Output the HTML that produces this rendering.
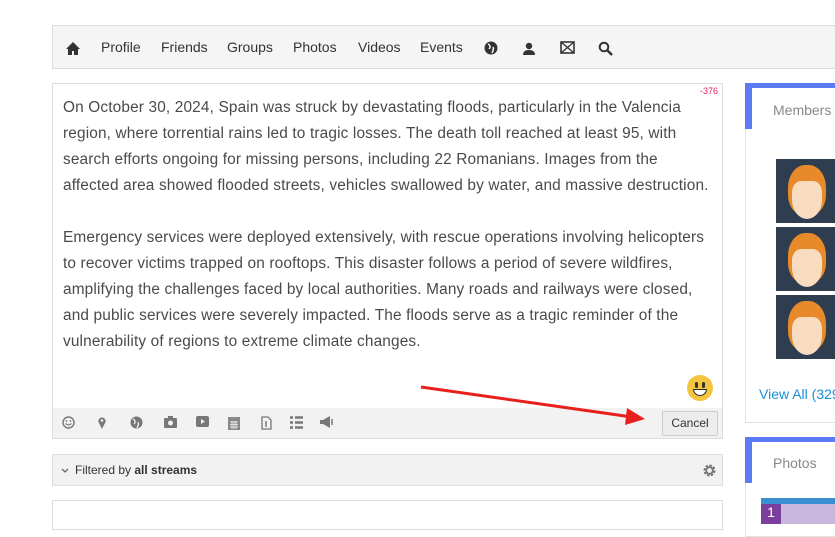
<!DOCTYPE html>
<html><head><meta charset="utf-8"><style>
*{box-sizing:border-box;margin:0;padding:0}
body{width:835px;height:517px;overflow:hidden;background:#fff;font-family:"Liberation Sans",sans-serif;position:relative;color:#333}
.nav{position:absolute;left:52px;top:25px;width:790px;height:44px;background:#f4f5f4;border:1px solid #ddd;border-right:none}
.nav span{position:absolute;top:13px;font-size:14px;color:#333}
.nav svg{position:absolute;top:15px}
.box{position:absolute;left:52px;top:83px;width:671px;height:356px;border:1px solid #ddd}
.txt{position:absolute;left:10px;top:11px;width:680px;font-size:15.4px;letter-spacing:0.15px;line-height:26px;color:#4a4a4a;white-space:nowrap}
.cnt{position:absolute;right:4px;top:2px;font-size:9px;color:#e0245e}
.tb{position:absolute;left:0;bottom:0;width:669px;height:30px;background:#f2f2f2}
.tb svg{position:absolute;top:8px}
.cancel{position:absolute;right:4px;top:3px;width:56px;height:25px;border:1px solid #ccc;background:#eceded;border-radius:2px;font-size:12px;text-align:center;line-height:23px;color:#333}
.filter{position:absolute;left:52px;top:454px;width:671px;height:32px;background:#f2f2f2;border:1px solid #ddd;font-size:12px;line-height:30px;padding-left:22px;color:#333}
.box2{position:absolute;left:52px;top:500px;width:671px;height:30px;border:1px solid #ddd}
.side{position:absolute;left:745px;width:100px;border:1px solid #e2e2e2}
.side .bl{position:absolute;left:-1px;top:-1px;width:7px;height:46px;background:#5b7cf6}
.side .bt{position:absolute;left:-1px;top:-1px;right:0;height:5px;background:#5b7cf6}
.side .h{position:absolute;left:27px;font-size:14px;color:#888}
.av{position:absolute;left:30px;width:70px;height:64px;background:#2e3e50;overflow:hidden}
</style></head><body>
<div class="nav">
<svg style="left:12px" width="16" height="15" viewBox="0 0 16 15"><path d="M8 1L1 8h2v6h4v-4h2v4h4V8h2z" fill="#333"/></svg>
<span style="left:48px">Profile</span><span style="left:108px">Friends</span><span style="left:174px">Groups</span><span style="left:240px">Photos</span><span style="left:305px">Videos</span><span style="left:367px">Events</span>
<svg style="left:431px" width="14" height="14" viewBox="0 0 14 14"><circle cx="7" cy="7" r="6.5" fill="#333"/><path d="M4 3c2 1 3 3 1 5M9 6c1 2 0 4-1 6" stroke="#f4f5f4" stroke-width="1.5" fill="none"/></svg>
<svg style="left:469px" width="14" height="15" viewBox="0 0 14 15"><circle cx="7" cy="5" r="3.2" fill="#333"/><path d="M1 14c0-4 3-5 6-5s6 1 6 5z" fill="#333"/></svg>
<svg style="left:507px" width="15" height="13" viewBox="0 0 15 13"><rect x="1" y="1" width="13" height="11" fill="none" stroke="#333" stroke-width="1.6"/><path d="M1 1l13 11M14 1L1 12" stroke="#333" stroke-width="1.3"/></svg>
<svg style="left:545px" width="15" height="15" viewBox="0 0 15 15"><circle cx="6" cy="6" r="4.3" fill="none" stroke="#333" stroke-width="2"/><path d="M9 9l5 5" stroke="#333" stroke-width="2.5"/></svg>
</div>
<div class="box">
<div class="cnt">-376</div>
<div class="txt">On October 30, 2024, Spain was struck by devastating floods, particularly in the Valencia<br>region, where torrential rains led to tragic losses. The death toll reached at least 95, with<br>search efforts ongoing for missing persons, including 22 Romanians. Images from the<br>affected area showed flooded streets, vehicles swallowed by water, and massive destruction.<br><br>Emergency services were deployed extensively, with rescue operations involving helicopters<br>to recover victims trapped on rooftops. This disaster follows a period of severe wildfires,<br>amplifying the challenges faced by local authorities. Many roads and railways were closed,<br>and public services were severely impacted. The floods serve as a tragic reminder of the<br>vulnerability of regions to extreme climate changes.</div>
<div style="position:absolute;left:634px;top:291px;width:26px;height:26px;border-radius:50%;background:#f5c542"><div style="position:absolute;left:8px;top:7px;width:3px;height:6px;background:#333;border-radius:2px"></div><div style="position:absolute;left:15px;top:7px;width:3px;height:6px;background:#333;border-radius:2px"></div><div style="position:absolute;left:6px;top:14px;width:14px;height:7px;background:#fff;border:1.5px solid #333;border-radius:0 0 7px 7px"></div></div>
<div class="tb">
<svg style="left:9px" width="13" height="13" viewBox="0 0 13 13"><circle cx="6.5" cy="6.5" r="5.5" fill="none" stroke="#777" stroke-width="1.4"/><circle cx="4.5" cy="5" r=".9" fill="#777"/><circle cx="8.5" cy="5" r=".9" fill="#777"/><path d="M3.5 7.5q3 3 6 0" stroke="#777" fill="none" stroke-width="1.2"/></svg>
<svg style="left:44px" width="10" height="14" viewBox="0 0 10 14"><path d="M5 13L1.5 6a3.6 3.6 0 1 1 7 0z" fill="#777"/><circle cx="5" cy="4.5" r="1.3" fill="#f2f2f2"/></svg>
<svg style="left:77px" width="13" height="13" viewBox="0 0 13 13"><circle cx="6.5" cy="6.5" r="6" fill="#777"/><path d="M3 3c2 1 3 3 1 5M8 6c1 2 0 4-1 6" stroke="#f2f2f2" stroke-width="1.3" fill="none"/></svg>
<svg style="left:111px" width="13" height="12" viewBox="0 0 13 12"><rect x="0" y="2" width="13" height="10" rx="1" fill="#777"/><rect x="4" y="0" width="5" height="3" fill="#777"/><circle cx="6.5" cy="7" r="2.5" fill="#f2f2f2"/></svg>
<svg style="left:143px" width="13" height="11" viewBox="0 0 13 11"><rect width="13" height="11" rx="2" fill="#777"/><path d="M5 3l4 2.5L5 8z" fill="#f2f2f2"/></svg>
<svg style="left:175px" width="12" height="14" viewBox="0 0 12 14"><rect y="1" width="12" height="13" fill="#888"/><path d="M2 6h8M2 8.5h8M2 11h8M4 5v8M6 5v8M8 5v8" stroke="#f2f2f2" stroke-width=".8"/></svg>
<svg style="left:208px" width="11" height="14" viewBox="0 0 11 14"><path d="M1 1h6l3 3v9H1z" fill="none" stroke="#777" stroke-width="1.3"/><path d="M5 5v6" stroke="#777" stroke-width="1.5"/></svg>
<svg style="left:237px" width="13" height="13" viewBox="0 0 13 13"><path d="M0 1.5h3M0 6.5h3M0 11.5h3M5 1.5h8M5 6.5h8M5 11.5h8" stroke="#777" stroke-width="2.4"/></svg>
<svg style="left:267px" width="14" height="12" viewBox="0 0 14 12"><path d="M0 4h3l7-4v12L3 8H0z" fill="#777"/><path d="M12 3v6" stroke="#777" stroke-width="1.5"/></svg>
<div class="cancel">Cancel</div>
</div>
</div>
<svg style="position:absolute;left:0;top:0" width="835" height="517"><path d="M421 387L632 417" stroke="#e8201c" stroke-width="3"/><path d="M645 419L627 408L625 425z" fill="#e8201c"/></svg>
<div class="filter"><svg style="position:absolute;left:8px;top:13px" width="8" height="6" viewBox="0 0 8 6"><path d="M1 1l3 3 3-3" stroke="#666" fill="none" stroke-width="1.3"/></svg>Filtered by <b>all streams</b>
<svg style="position:absolute;right:6px;top:9px" width="13" height="13" viewBox="0 0 13 13"><circle cx="6.5" cy="6.5" r="4.5" fill="none" stroke="#777" stroke-width="3" stroke-dasharray="2.2 1.3"/><circle cx="6.5" cy="6.5" r="3.3" fill="none" stroke="#777" stroke-width="1.8"/></svg></div>
<div class="box2"></div>
<div class="side" style="top:83px;height:340px"><div class="bt"></div><div class="bl"></div><div class="h" style="top:18px">Members</div>
<div class="av" style="top:75px"></div><div class="av" style="top:143px"></div><div class="av" style="top:211px"></div>
<div style="position:absolute;left:13px;top:302px;font-size:14px;color:#1a8fd6;white-space:nowrap">View All (329)</div></div>
<div class="side" style="top:437px;height:100px"><div class="bt"></div><div class="bl"></div><div class="h" style="top:17px">Photos</div>
<div style="position:absolute;left:15px;top:60px;width:90px;height:6px;background:#3a8fd0"></div>
<div style="position:absolute;left:15px;top:66px;width:90px;height:20px;background:#c9b6dc"></div>
<div style="position:absolute;left:15px;top:66px;width:20px;height:20px;background:#7a3f9d;color:#fff;font-size:14px;text-align:center">1</div></div>
<style>.av::before{content:"";position:absolute;left:12px;top:6px;width:38px;height:50px;background:#e88a2a;border-radius:45% 45% 40% 40%}.av::after{content:"";position:absolute;left:16px;top:22px;width:30px;height:38px;background:#f8dcc0;border-radius:30% 30% 50% 50%}</style>
</body></html>
